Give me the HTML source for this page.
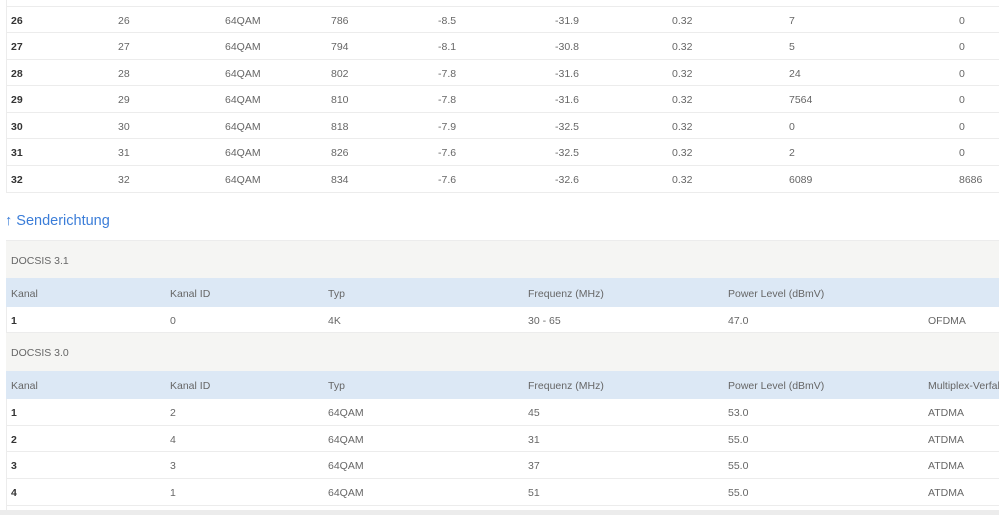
<!DOCTYPE html>
<html><head><meta charset="utf-8"><style>
*{margin:0;padding:0;box-sizing:border-box}
body{width:999px;height:515px;overflow:hidden;background:#fff;font-family:"Liberation Sans",sans-serif;font-size:10.5px;color:#666;position:relative}
.r{position:absolute;left:6px;width:993px;border-bottom:1px solid #ececec}
.r span{position:absolute;top:50%;transform:translateY(-42%);white-space:nowrap}
.r span.b{color:#333;font-weight:bold}
.sec{background:#f5f5f3}
.hd{background:#dce8f5}
.box{position:absolute;left:6px;top:240px;width:993px;height:270px;border-left:1px solid #ececec;border-top:1px solid #ececec}
</style></head><body>
<div style="position:absolute;left:6px;top:0;width:993px;height:193px;border-left:1px solid #ececec"></div>
<div class="r" style="top:0;height:7px"></div>
<div class="r" style="top:7px;height:26px"><span class="b" style="left:5px">26</span><span style="left:112px">26</span><span style="left:219px">64QAM</span><span style="left:325px">786</span><span style="left:432px">-8.5</span><span style="left:549px">-31.9</span><span style="left:666px">0.32</span><span style="left:783px">7</span><span style="left:953px">0</span></div>
<div class="r" style="top:33px;height:27px"><span class="b" style="left:5px">27</span><span style="left:112px">27</span><span style="left:219px">64QAM</span><span style="left:325px">794</span><span style="left:432px">-8.1</span><span style="left:549px">-30.8</span><span style="left:666px">0.32</span><span style="left:783px">5</span><span style="left:953px">0</span></div>
<div class="r" style="top:60px;height:26px"><span class="b" style="left:5px">28</span><span style="left:112px">28</span><span style="left:219px">64QAM</span><span style="left:325px">802</span><span style="left:432px">-7.8</span><span style="left:549px">-31.6</span><span style="left:666px">0.32</span><span style="left:783px">24</span><span style="left:953px">0</span></div>
<div class="r" style="top:86px;height:27px"><span class="b" style="left:5px">29</span><span style="left:112px">29</span><span style="left:219px">64QAM</span><span style="left:325px">810</span><span style="left:432px">-7.8</span><span style="left:549px">-31.6</span><span style="left:666px">0.32</span><span style="left:783px">7564</span><span style="left:953px">0</span></div>
<div class="r" style="top:113px;height:26px"><span class="b" style="left:5px">30</span><span style="left:112px">30</span><span style="left:219px">64QAM</span><span style="left:325px">818</span><span style="left:432px">-7.9</span><span style="left:549px">-32.5</span><span style="left:666px">0.32</span><span style="left:783px">0</span><span style="left:953px">0</span></div>
<div class="r" style="top:139px;height:27px"><span class="b" style="left:5px">31</span><span style="left:112px">31</span><span style="left:219px">64QAM</span><span style="left:325px">826</span><span style="left:432px">-7.6</span><span style="left:549px">-32.5</span><span style="left:666px">0.32</span><span style="left:783px">2</span><span style="left:953px">0</span></div>
<div class="r" style="top:166px;height:27px"><span class="b" style="left:5px">32</span><span style="left:112px">32</span><span style="left:219px">64QAM</span><span style="left:325px">834</span><span style="left:432px">-7.6</span><span style="left:549px">-32.6</span><span style="left:666px">0.32</span><span style="left:783px">6089</span><span style="left:953px">8686</span></div>
<div style="position:absolute;left:5px;top:213px;font-size:14.5px;color:#3b7dd8">↑ Senderichtung</div>
<div class="box"></div>
<div class="r sec" style="top:241px;height:37px;border:none"><span style="left:5px">DOCSIS 3.1</span></div>
<div class="r hd" style="top:278px;height:29px;border:none"><span style="left:5px">Kanal</span><span style="left:164px">Kanal ID</span><span style="left:322px">Typ</span><span style="left:522px">Frequenz (MHz)</span><span style="left:722px">Power Level (dBmV)</span></div>
<div class="r" style="top:307px;height:26px"><span class="b" style="left:5px">1</span><span style="left:164px">0</span><span style="left:322px">4K</span><span style="left:522px">30 - 65</span><span style="left:722px">47.0</span><span style="left:922px">OFDMA</span></div>
<div class="r sec" style="top:333px;height:38px;border:none"><span style="left:5px">DOCSIS 3.0</span></div>
<div class="r hd" style="top:371px;height:28px;border:none"><span style="left:5px">Kanal</span><span style="left:164px">Kanal ID</span><span style="left:322px">Typ</span><span style="left:522px">Frequenz (MHz)</span><span style="left:722px">Power Level (dBmV)</span><span style="left:922px">Multiplex-Verfahren</span></div>
<div class="r" style="top:399px;height:27px"><span class="b" style="left:5px">1</span><span style="left:164px">2</span><span style="left:322px">64QAM</span><span style="left:522px">45</span><span style="left:722px">53.0</span><span style="left:922px">ATDMA</span></div>
<div class="r" style="top:426px;height:26px"><span class="b" style="left:5px">2</span><span style="left:164px">4</span><span style="left:322px">64QAM</span><span style="left:522px">31</span><span style="left:722px">55.0</span><span style="left:922px">ATDMA</span></div>
<div class="r" style="top:452px;height:27px"><span class="b" style="left:5px">3</span><span style="left:164px">3</span><span style="left:322px">64QAM</span><span style="left:522px">37</span><span style="left:722px">55.0</span><span style="left:922px">ATDMA</span></div>
<div class="r" style="top:479px;height:27px"><span class="b" style="left:5px">4</span><span style="left:164px">1</span><span style="left:322px">64QAM</span><span style="left:522px">51</span><span style="left:722px">55.0</span><span style="left:922px">ATDMA</span></div>
<div style="position:absolute;left:0;top:510px;width:999px;height:5px;background:#ececec"></div>
</body></html>
